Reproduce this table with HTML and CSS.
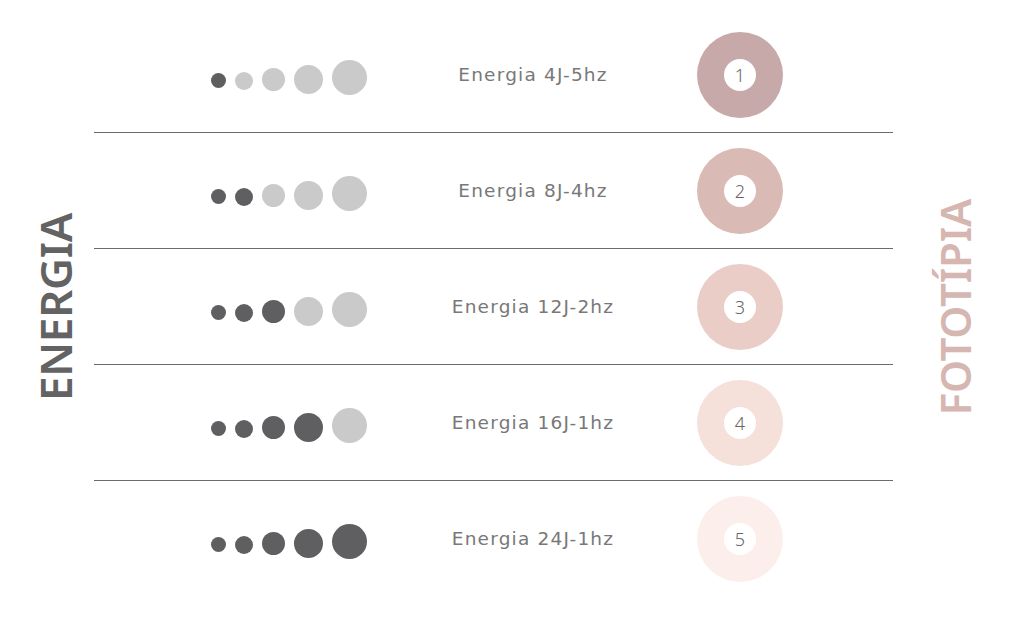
FILE: index.html
```html
<!DOCTYPE html>
<html lang="pt">
<head>
<meta charset="utf-8">
<link rel="stylesheet" href="styles.css">
</head>
<body>
<div class="page">
  <div class="side side-left"><span class="vlabel energia">ENERGIA</span></div>
  <div class="table">
    <div class="row">
      <div class="dots"><span class="d d1 on"></span><span class="d d2"></span><span class="d d3"></span><span class="d d4"></span><span class="d d5"></span></div>
      <div class="label">Energia 4J-5hz</div>
      <div class="ring r1"><span class="num">1</span></div>
    </div>
    <div class="row">
      <div class="dots"><span class="d d1 on"></span><span class="d d2 on"></span><span class="d d3"></span><span class="d d4"></span><span class="d d5"></span></div>
      <div class="label">Energia 8J-4hz</div>
      <div class="ring r2"><span class="num">2</span></div>
    </div>
    <div class="row">
      <div class="dots"><span class="d d1 on"></span><span class="d d2 on"></span><span class="d d3 on"></span><span class="d d4"></span><span class="d d5"></span></div>
      <div class="label">Energia 12J-2hz</div>
      <div class="ring r3"><span class="num">3</span></div>
    </div>
    <div class="row">
      <div class="dots"><span class="d d1 on"></span><span class="d d2 on"></span><span class="d d3 on"></span><span class="d d4 on"></span><span class="d d5"></span></div>
      <div class="label">Energia 16J-1hz</div>
      <div class="ring r4"><span class="num">4</span></div>
    </div>
    <div class="row last">
      <div class="dots"><span class="d d1 on"></span><span class="d d2 on"></span><span class="d d3 on"></span><span class="d d4 on"></span><span class="d d5 on"></span></div>
      <div class="label">Energia 24J-1hz</div>
      <div class="ring r5"><span class="num">5</span></div>
    </div>
  </div>
  <div class="side side-right"><span class="vlabel fototipia">FOTOTÍPIA</span></div>
</div>
</body>
</html>
```

FILE: styles.css
```css
html, body {
  margin: 0;
  padding: 0;
  background: #ffffff;
}
body {
  width: 1024px;
  height: 622px;
  overflow: hidden;
  font-family: "Noto Sans", "Open Sans", sans-serif;
}
.page {
  display: flex;
  width: 1024px;
  height: 622px;
  padding-top: 17px;
  box-sizing: border-box;
}
.side {
  display: flex;
  align-items: center;
  height: 580px;
}
.side-left {
  width: 94px;
  padding-left: 35px;
  box-sizing: border-box;
}
.side-right {
  width: 131px;
  padding-left: 42px;
  box-sizing: border-box;
}
.vlabel {
  writing-mode: vertical-rl;
  transform: rotate(180deg);
  font-weight: 600;
  line-height: 40px;
}
.energia {
  color: #636363;
  font-size: 44px;
  letter-spacing: -0.3px;
}
.fototipia {
  color: #d5b6b1;
  font-size: 42px;
  letter-spacing: -0.2px;
}
.table {
  width: 799px;
  display: flex;
  flex-direction: column;
}
.row {
  height: 115px;
  border-bottom: 1px solid #6a6a6a;
  display: grid;
  grid-template-columns: 158px 328px 86px;
  padding-left: 117px;
  align-items: center;
}
.row.last {
  border-bottom: none;
}
.dots {
  display: flex;
  align-items: center;
  gap: 9px;
  padding-top: 9px;
}
.d {
  display: block;
  border-radius: 50%;
  background: #cacaca;
}
.d.on {
  background: #5f5f62;
}
.d1 { width: 15px; height: 15px; margin-top: 3px; }
.d2 { width: 18px; height: 18px; margin-top: 3px; }
.d3 { width: 23px; height: 23px; margin-top: 1px; }
.d4 { width: 29px; height: 29px; }
.d5 { width: 35px; height: 35px; margin-top: -3px; }
.label {
  text-align: center;
  font-family: "DejaVu Sans", "Noto Sans", sans-serif;
  font-size: 18.5px;
  color: #787878;
  letter-spacing: 1.2px;
}
.ring {
  width: 86px;
  height: 86px;
  border-radius: 50%;
  display: flex;
  align-items: center;
  justify-content: center;
}
.num {
  width: 32px;
  height: 32px;
  border-radius: 50%;
  background: #ffffff;
  display: flex;
  align-items: center;
  justify-content: center;
  font-size: 18px;
  color: #666666;
  font-weight: 300;
}
.r1 { background: #c8a9aa; }
.r2 { background: #d9bab4; }
.r3 { background: #eacdc6; }
.r4 { background: #f5e0da; }
.r5 { background: #fcefeb; }
```
